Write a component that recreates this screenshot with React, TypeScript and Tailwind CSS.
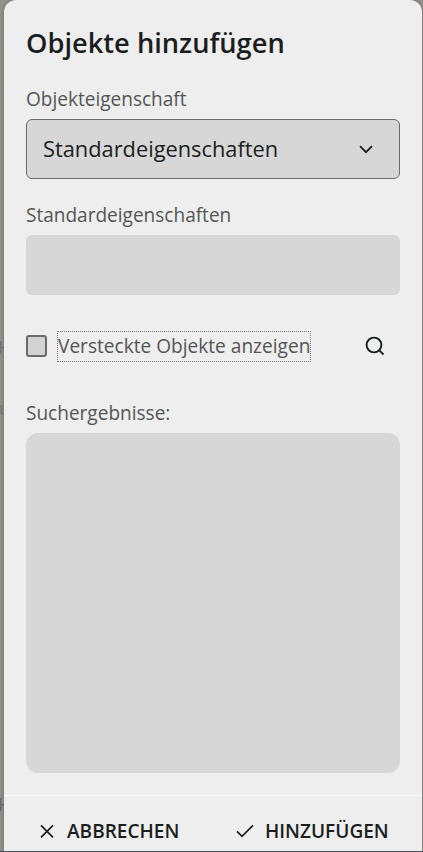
export default function App() {
  return (
    <div className="relative flex h-[852px] w-[423px] overflow-hidden border-b border-[#4c4c58] bg-[#92918d] pl-1 pr-px font-['Open_Sans','Noto_Sans',sans-serif] text-[#1b1e1e]">
      <span className="absolute -left-[2px] top-[335px] text-[19px] leading-6 text-[#777672]">H</span>
      <span className="absolute -left-px top-[396px] text-[19px] leading-6 text-[#7b7a72]">u</span>
      <span className="absolute -left-[2px] top-[792px] text-[19px] leading-6 text-[#6c6c6c]">H</span>
      <section className="relative flex h-[851px] w-[418px] flex-col rounded-t-[12px] bg-[#eee] shadow-[0_0_4px_rgba(0,0,0,0.25)]">
        <div className="flex h-[795px] flex-col px-[22px] pt-6">
          <h1 className="h-[38px] whitespace-nowrap text-[27.25px] font-semibold leading-[38px]">Objekte hinzufügen</h1>
          <label className="mt-6 h-[26px] text-[19.05px] leading-[26px] text-[#555]">Objekteigenschaft</label>
          <button className="mt-[7px] flex h-[60px] w-[374px] shrink-0 items-center justify-between rounded-[6px] border border-[#6b6b6b] bg-[#d7d7d7] pl-4 pr-[26px] text-[21.8px]">
            <span className="h-[30px] leading-[30px]">Standardeigenschaften</span>
            <svg className="h-3 w-[14px]" viewBox="0 0 14 12" fill="none" stroke="currentColor" strokeWidth="1.8"><path d="M1 3.2 7 9.2 13 3.2" /></svg>
          </button>
          <label className="mt-[23px] h-[26px] text-[19.05px] leading-[26px] text-[#555]">Standardeigenschaften</label>
          <input aria-label="Standardeigenschaften" className="mt-[7px] h-[60px] w-[374px] shrink-0 rounded-[6px] bg-[#d7d7d7]" />
          <div className="mt-9 flex h-[31px] items-center">
            <span className="mb-px h-[22px] w-[21px] rounded-[3px] border-2 border-[#6b6b6b] bg-[#d2d2d2]" />
            <span className="ml-[10px] flex h-[31px] w-[254px] items-center whitespace-nowrap border border-dotted border-[#777] text-[19.1px] text-[#555]">Versteckte Objekte anzeigen</span>
            <svg className="mb-0.5 ml-[54px] h-5 w-5" viewBox="0 0 20 20" fill="none" stroke="currentColor" strokeWidth="1.9"><circle cx="9" cy="9" r="7.4" /><path d="m14.3 14.3 4.2 4.2" /></svg>
          </div>
          <label className="mt-[38px] h-[26px] text-[19.05px] leading-[26px] text-[#555]">Suchergebnisse:</label>
          <div className="mt-[7px] h-[340px] w-[374px] shrink-0 rounded-[12px] bg-[#d7d7d7]" />
        </div>
        <footer className="flex h-14 border-t border-white pl-[35px] pt-[21px] text-[19.05px] font-semibold leading-7">
          <button className="flex h-7 w-[197px] items-center">
            <svg className="h-4 w-4" viewBox="0 0 16 16" fill="none" stroke="currentColor" strokeWidth="1.7"><path d="m2 2.3 12 12M14 2.3 2 14.3" /></svg>
            <span className="ml-3">ABBRECHEN</span>
          </button>
          <button className="flex h-7 items-center">
            <svg className="h-4 w-[18px]" viewBox="0 0 18 16" fill="none" stroke="currentColor" strokeWidth="1.7"><path d="m1 8.3 5 5L17 2.3" /></svg>
            <span className="ml-[11px]">HINZUFÜGEN</span>
          </button>
        </footer>
      </section>
    </div>
  );
}
